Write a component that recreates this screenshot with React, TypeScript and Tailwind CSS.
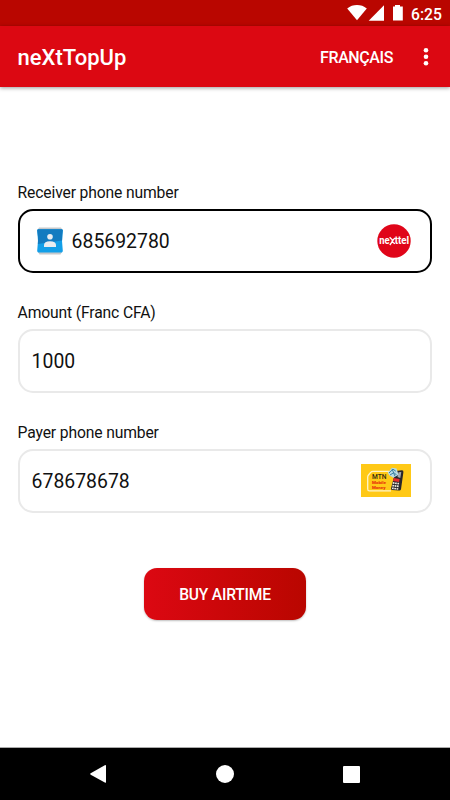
import { useState } from "react";
import type { ReactNode } from "react";
import clsx from "clsx";

const StatusBar = () => (
  <div className="flex h-[26px] shrink-0 items-center bg-[#b90600] pl-[346px] text-white">
    <svg width="62" height="26" viewBox="346 0 62 26" fill="currentColor">
      <path d="M357 20.3 347.2 8.4a15.5 15.5 0 0 1 19.6 0z" />
      <path d="M384 5.3v15.4h-15.3z" />
      <path d="M393 6.5h2V5h5v1.5h2.8v14H393z" />
    </svg>
    <span className="ml-[3px] pt-[3px] text-[15.7px] leading-none font-medium">6:25</span>
  </div>
);

const AppBar = () => (
  <header className="relative flex h-[61px] shrink-0 items-center bg-[#dc0812] pl-[17.6px] text-white shadow-[0_1px_4px_rgba(0,0,0,0.4)]">
    <h1 className="pt-[3px] text-[22px] leading-none font-medium">neXtTopUp</h1>
    <button type="button" className="mr-[30px] ml-auto pt-[2px] text-[16px] font-medium tracking-[-0.4px]">
      FRANÇAIS
    </button>
    <button type="button" aria-label="Menu" className="mr-[21px]">
      <svg width="6" height="20" viewBox="0 0 6 20" fill="currentColor">
        <circle cx="3" cy="3.3" r="2.3" />
        <circle cx="3" cy="9.8" r="2.3" />
        <circle cx="3" cy="16.3" r="2.3" />
      </svg>
    </button>
  </header>
);

const ContactIcon = () => (
  <svg width="28" height="28" viewBox="0 0 28 28" className="mr-2 shrink-0">
    <path d="M3 .5h22l1.5 2.5H1.5zM2 25h24l-1.5 2.6h-21z" fill="#c6c9cc" />
    <path d="M2.2 2.2h23.6q1.2.2 1 1.4-1.5 10 0 20.2 0 1.5-1.2 1.6H2.4q-1.2-.1-1.2-1.6 1.5-10.2 0-20.2-.2-1.2 1-1.4z" fill="#129fe8" />
    <path d="M2.2 2.2h23.6q1.2.2 1 1.4-.8 5-.7 9.8L1.9 17q.7-7-.7-13.4-.2-1.2 1-1.4z" fill="#127bc0" />
    <circle cx="14" cy="9.7" r="2.8" fill="#e8edf1" />
    <path d="M8 20v-2q0-3.8 6-3.8t6 3.8v2z" fill="#e8edf1" />
  </svg>
);

const NexttelLogo = () => (
  <svg width="34" height="34" viewBox="0 0 34 34" className="shrink-0">
    <circle cx="17" cy="17" r="16.7" fill="#e00519" />
    <g fill="white" fontSize="10.5" fontWeight="700">
      <text x="2.3" y="19.6" textLength="10.4" lengthAdjust="spacingAndGlyphs">ne</text>
      <text x="17.8" y="19.6" textLength="14.4" lengthAdjust="spacingAndGlyphs">ttel</text>
    </g>
    <path d="m12.6 13.2 3.4 3.4-3.2 4.4M18 14l-3.4 3.4M14.8 17.6l3.2 2.2" fill="none" stroke="white" strokeWidth="1.3" />
  </svg>
);

const MobileMoneyLogo = () => (
  <svg width="50" height="33" viewBox="0 0 50 33" className="shrink-0">
    <path fill="#ffc917" d="M0 0h50v33H0z" />
    <path d="M28 7.4H12q-1.5 0-2.5 1.2L7.5 11q-.8 1-.8 2.2V25q0 1.9 1.7 1.9H30" fill="none" stroke="#fff5c9" strokeWidth="1.3" />
    <text x="11" y="14.8" fontSize="6.6" fontWeight="500" fill="#322b10" textLength="14.5" lengthAdjust="spacingAndGlyphs">MTN</text>
    <g fill="#e8340b" fontSize="4" fontWeight="900">
      <text x="11" y="20.2" textLength="14" lengthAdjust="spacingAndGlyphs">Mobile</text>
      <text x="11" y="25" textLength="13.5" lengthAdjust="spacingAndGlyphs">Money</text>
    </g>
    <path d="m34.5 7 6.5-.8q1.7.2 1.4 2L40 25.2q-.4 1.6-2 1.4l-7-.6q-1.3-.3-1-1.6z" fill="#28252c" />
    <path d="m37.5 8.3 2.8-.4-1 6-2.8-1z" fill="#a4abb0" />
    <path d="m32.7 14 6 1-.7 3-6-1z" fill="#e42b2d" />
    <path d="m31.8 18.9 6.6.8M31.4 21.6l6.5.8M31 24.2l6.4.8" stroke="#eeeade" strokeWidth="1.6" strokeDasharray="1.7 .6" />
    <path d="m26.8 8.7 4-5 4.7.8 2 6.3-5 3-4-2.2z" fill="#b9dce6" />
    <path d="m28 9 4-3.8 2.8 2M29 11l4-2.5 2.4 2.5M31 4.8l3 7.5" fill="none" stroke="#387f9f" strokeWidth="1" />
  </svg>
);

type FieldProps = {
  label: string;
  value: string;
  onChange: (value: string) => void;
  active?: boolean;
  icon?: ReactNode;
  logo?: ReactNode;
};

const Field = ({ label, value, onChange, active, icon, logo }: FieldProps) => (
  <label className="flex h-[120px] flex-col">
    <span className="h-[26.5px] text-[15.7px] leading-[21px] tracking-[-0.15px]">{label}</span>
    <span
      className={clsx(
        "flex h-[64px] items-center rounded-[15px] border-2 pr-[19.5px]",
        active ? "border-black" : "border-[#e9e9e9]",
        icon ? "pl-4" : "pl-3",
      )}
    >
      {icon}
      <input
        type="tel"
        value={value}
        onChange={(e) => onChange(e.target.value)}
        className="min-w-0 flex-1 pt-[2px] text-[19.4px] text-[#111111] outline-none"
      />
      {logo}
    </span>
  </label>
);

const NavigationBar = () => (
  <nav className="flex h-[53px] shrink-0 items-center justify-between border-t border-[#aaaaaa] bg-black px-[90px] text-white">
    <svg width="16" height="20" viewBox="0 0 16 20" fill="currentColor">
      <path d="M14.8 1.2q1.2-.5 1.2.7v16q0 1.2-1.2.7L.7 10.7q-1-.7 0-1.4z" />
    </svg>
    <span className="size-[18px] rounded-full bg-white" />
    <span className="size-[17px] rounded-[1px] bg-white" />
  </nav>
);

export default function App() {
  const [receiver, setReceiver] = useState("685692780");
  const [amount, setAmount] = useState("1000");
  const [payer, setPayer] = useState("678678678");

  return (
    <div className="flex h-[800px] w-[450px] flex-col overflow-hidden bg-white font-['Roboto',sans-serif] text-[#111111]">
      <StatusBar />
      <AppBar />
      <main className="flex flex-1 flex-col px-[17.6px] pt-[95px]">
        <Field
          label="Receiver phone number"
          value={receiver}
          onChange={setReceiver}
          active
          icon={<ContactIcon />}
          logo={<NexttelLogo />}
        />
        <Field label="Amount (Franc CFA)" value={amount} onChange={setAmount} />
        <Field
          label="Payer phone number"
          value={payer}
          onChange={setPayer}
          logo={<MobileMoneyLogo />}
        />
        <button
          type="button"
          className="mt-[26px] h-[52px] w-[162px] self-center rounded-[13px] bg-linear-to-r from-[#dc0812] to-[#b90600] pt-[3px] text-[15.6px] font-medium tracking-[-0.2px] text-white shadow-[0_1px_2px_rgba(0,0,0,0.25)]"
        >
          BUY AIRTIME
        </button>
      </main>
      <NavigationBar />
    </div>
  );
}
